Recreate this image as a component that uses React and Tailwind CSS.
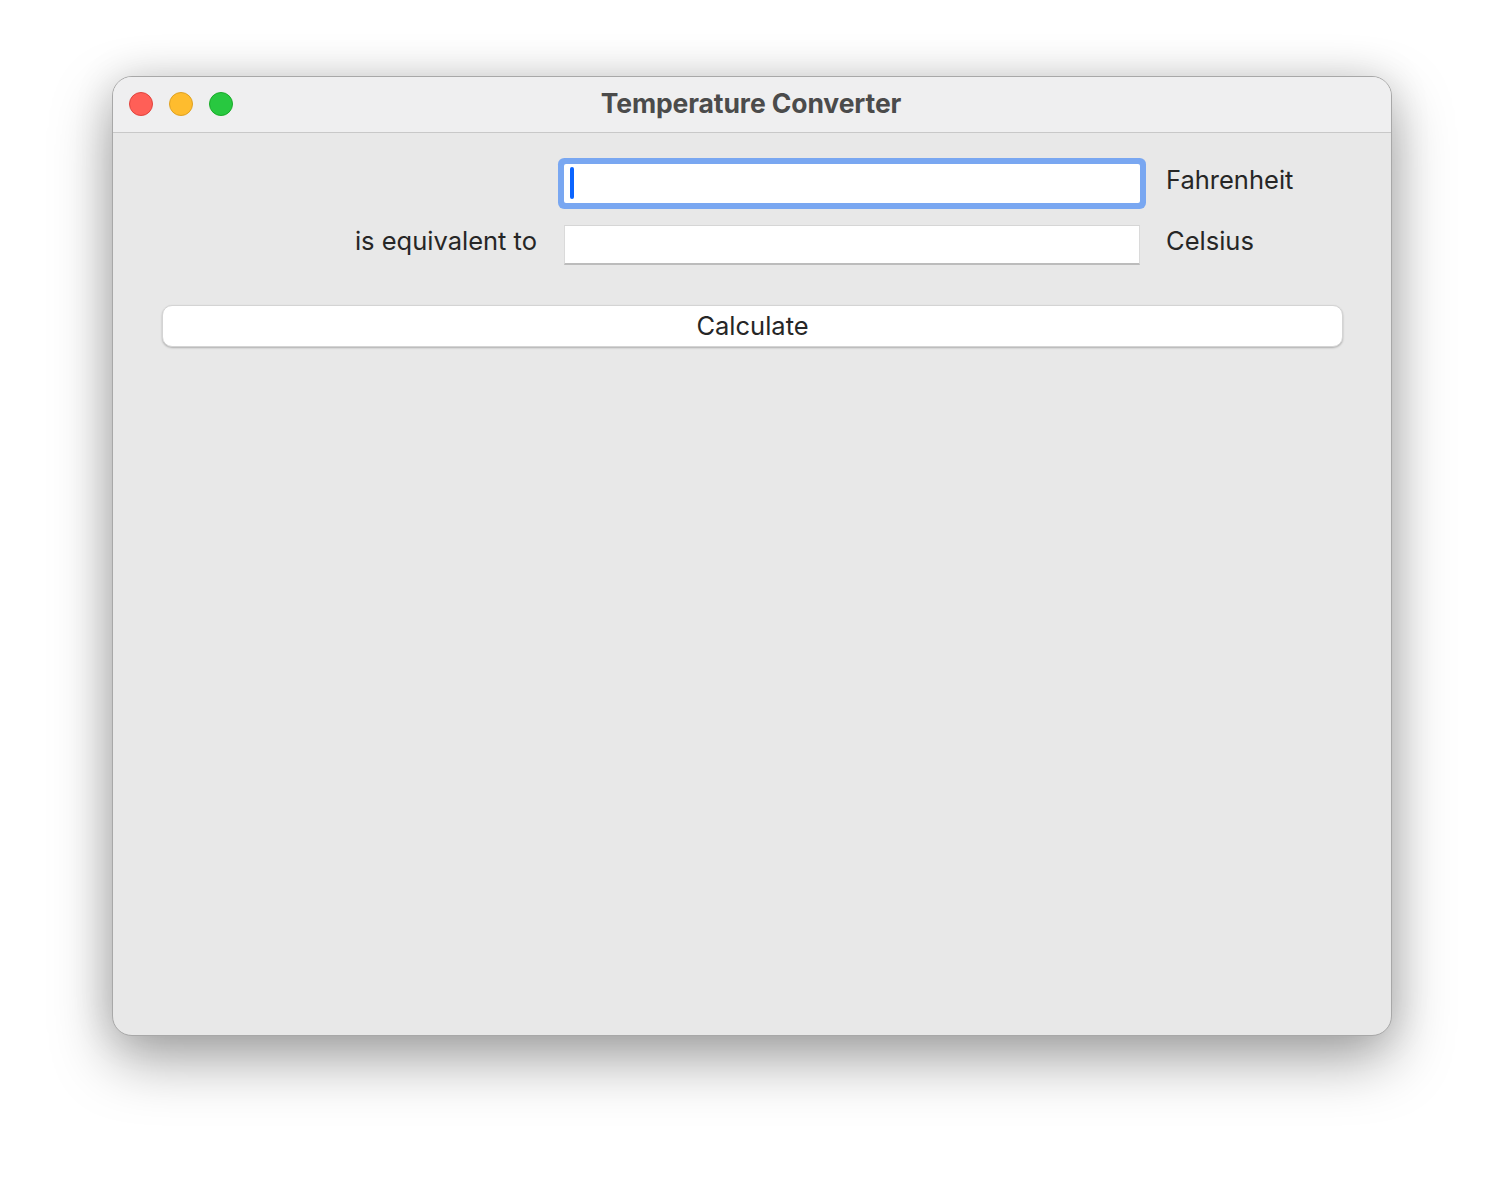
import React from "react";

const FONT = { fontFamily: "Inter, 'Noto Sans', 'Liberation Sans', sans-serif" };

function TrafficLights() {
  return (
    <div className="absolute left-[16px] top-[15px] flex gap-[16px]">
      <span className="block h-[24px] w-[24px] rounded-full bg-[#ff5f57] border border-[#e0443e]" />
      <span className="block h-[24px] w-[24px] rounded-full bg-[#febc2e] border border-[#dea123]" />
      <span className="block h-[24px] w-[24px] rounded-full bg-[#28c840] border border-[#1aab29]" />
    </div>
  );
}

export default function App() {
  return (
    <div className="min-h-[1184px] bg-white pl-[112px] pt-[76px]" style={FONT}>
      <div className="w-[1280px] h-[960px] rounded-[20px] bg-[#e8e8e8] overflow-hidden border border-[#a8a8a8] shadow-[0_24px_60px_rgba(0,0,0,0.35),0_0_40px_rgba(0,0,0,0.12)]">
        <div className="relative h-[56px] bg-[#efeff0] border-b border-[#c8c8c8] flex items-center justify-center">
          <TrafficLights />
          <span className="text-[26.5px] font-bold text-[#4b4b4b] tracking-[-0.1px] pb-[1px] pr-[2px]">
            Temperature Converter
          </span>
        </div>

        <div className="px-[49px] pt-[31px]">
          <div className="grid grid-cols-[376px_576px_1fr] gap-x-[26px] gap-y-[22px] items-start">
            <div />
            <div className="relative h-[39px] bg-white rounded-[2px] shadow-[0_0_0_6px_#79a7f1]">
              <span className="absolute left-[6px] top-[3px] h-[32px] w-[4px] rounded-[2px] bg-[#0a64ff]" />
            </div>
            <span className="h-[39px] leading-[31px] text-[25.5px] text-[#262626]">Fahrenheit</span>

            <span className="h-[40px] leading-[32px] text-[25.5px] text-[#262626] text-right pr-[1px]">is equivalent to</span>
            <div className="h-[40px] bg-white border-t border-[#d6d6d6] border-b-2 border-b-[#bcbcbc] border-l border-l-[#dadada] border-r border-r-[#dadada]" />
            <span className="h-[40px] leading-[32px] text-[25.5px] text-[#262626]">Celsius</span>
          </div>

          <button className="mt-[40px] w-[1181px] h-[42px] bg-white rounded-[10px] border border-[#d4d4d4] shadow-[0_1px_2px_rgba(0,0,0,0.25)] text-[25.5px] text-[#262626] flex items-center justify-center">
            Calculate
          </button>
        </div>
      </div>
    </div>
  );
}
